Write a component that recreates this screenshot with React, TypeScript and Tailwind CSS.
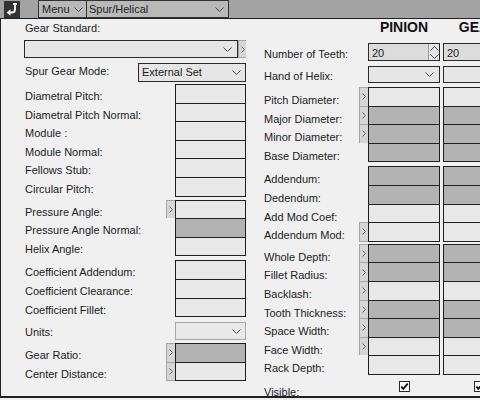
import clsx from "clsx";

type Field = { label: string; dark?: boolean; push?: boolean };

const leftA: Field[] = [
  { label: "Diametral Pitch:" },
  { label: "Diametral Pitch Normal:" },
  { label: "Module :" },
  { label: "Module Normal:" },
  { label: "Fellows Stub:" },
  { label: "Circular Pitch:" },
];

const leftB: Field[] = [
  { label: "Pressure Angle:", push: true },
  { label: "Pressure Angle Normal:", dark: true },
  { label: "Helix Angle:" },
];

const leftC: Field[] = [
  { label: "Coefficient Addendum:" },
  { label: "Coefficient Clearance:" },
  { label: "Coefficient Fillet:" },
];

const leftD: Field[] = [
  { label: "Gear Ratio:", push: true, dark: true },
  { label: "Center Distance:", push: true },
];

const diameters: Field[] = [
  { label: "Pitch Diameter:", push: true },
  { label: "Major Diameter:", push: true, dark: true },
  { label: "Minor Diameter:", push: true, dark: true },
  { label: "Base Diameter:", dark: true },
];

const addenda: Field[] = [
  { label: "Addendum:", dark: true },
  { label: "Dedendum:", dark: true },
  { label: "Add Mod Coef:" },
  { label: "Addendum Mod:", push: true },
];

const depths: Field[] = [
  { label: "Whole Depth:", push: true, dark: true },
  { label: "Fillet Radius:", push: true, dark: true },
  { label: "Backlash:", push: true },
  { label: "Tooth Thickness:", push: true, dark: true },
  { label: "Space Width:", push: true, dark: true },
  { label: "Face Width:", push: true },
  { label: "Rack Depth:" },
];

function Chevron() {
  return (
    <svg width="9" height="5" viewBox="0 0 9 5" className="shrink-0">
      <path d="M0.5 0.5 4.5 4.5 8.5 0.5" fill="none" stroke="#4a4a4a" />
    </svg>
  );
}

function Caret() {
  return (
    <svg width="4" height="7" viewBox="0 0 4 7" className="shrink-0">
      <path d="M0.5 0.5 3.5 3.5 0.5 6.5" fill="none" stroke="#6a6a6a" />
    </svg>
  );
}

function AppIcon() {
  return (
    <svg width="16" height="17" viewBox="0 0 16 17" className="mt-px shrink-0">
      <rect width="16" height="17" fill="#333" />
      <rect x="9" y="2" width="4" height="2" fill="#f0f0f0" />
      <path d="M11 4 V8 Q11 11.5 7.5 11.5 H5.5" fill="none" stroke="#f0f0f0" strokeWidth="2" />
      <path d="M2.5 11.5 L6.5 8.3 V14.7 Z" fill="#f0f0f0" />
    </svg>
  );
}

function Push({ last, w = "w-[9px]" }: { last?: boolean; w?: string }) {
  return (
    <div
      className={clsx(
        "shrink-0 flex items-center justify-center bg-[#d6d6d6] border-l border-t border-[#a6a6a6]",
        w,
        last && "border-b"
      )}
    >
      <Caret />
    </div>
  );
}

function Cell({ dark, last, w }: { dark?: boolean; last?: boolean; w: string }) {
  return (
    <div
      className={clsx(
        "shrink-0 border-x border-t border-[#1f1f1f]",
        w,
        dark ? "bg-[#b3b3b3]" : "bg-[#e8e8e8]",
        last && "border-b"
      )}
    />
  );
}

function Check() {
  return (
    <svg width="11" height="11" viewBox="0 0 11 11">
      <rect x="0.5" y="0.5" width="10" height="10" fill="#fbfbfb" stroke="#2a2a2a" />
      <path d="M2.3 5.6 4.3 7.8 8.7 2.6" fill="none" stroke="#111" strokeWidth="1.8" />
    </svg>
  );
}

function LeftGroup({ rows, className }: { rows: Field[]; className?: string }) {
  return (
    <div className={clsx("flex flex-col", className)}>
      {rows.map((r, i) => {
        const last = i === rows.length - 1;
        return (
          <div key={r.label} className={clsx("flex", last ? "h-[19.6px]" : "h-[18.6px]")}>
            <span className="flex-1 pt-[5px] leading-[14px] whitespace-nowrap">{r.label}</span>
            {r.push && <Push last={last} />}
            <Cell dark={r.dark} last={last} w="w-[71px]" />
          </div>
        );
      })}
    </div>
  );
}

function RightGroup({ rows, className }: { rows: Field[]; className?: string }) {
  return (
    <div className={clsx("flex flex-col", className)}>
      {rows.map((r, i) => {
        const last = i === rows.length - 1;
        return (
          <div key={r.label} className={clsx("flex", last ? "h-[19.6px]" : "h-[18.6px]")}>
            <span className="w-[95px] shrink-0 pt-[6px] leading-[14px] whitespace-nowrap">{r.label}</span>
            {r.push ? <Push last={last} /> : <div className="w-[9px] shrink-0" />}
            <Cell dark={r.dark} last={last} w="w-[72px]" />
            <div className="w-[3px] shrink-0" />
            <Cell dark={r.dark} last={last} w="w-[72px]" />
          </div>
        );
      })}
    </div>
  );
}

export default function App() {
  return (
    <div className="w-[480px] h-[400px] overflow-hidden bg-[#f0f0f0] text-[11px] text-[#1c1c1c] font-['Liberation_Sans',Arial,sans-serif]">
      {/* title strip */}
      <div className="h-[18px] bg-[#a3a3a3] flex items-start">
        <div className="ml-[4px]">
          <AppIcon />
        </div>
        <div className="ml-[18px] w-[49px] h-[18px] border border-[#333] bg-[#b9b9b9] flex items-center justify-between pl-[3px] pr-[3px]">
          <span className="text-[#222]">Menu</span>
          <Chevron />
        </div>
        <div className="w-[142px] h-[18px] border border-l-0 border-[#333] bg-[#b9b9b9] flex items-center justify-between pl-[2px] pr-[4px]">
          <span className="text-[#222]">Spur/Helical</span>
          <Chevron />
        </div>
      </div>

      <div className="w-[600px] h-[380px] border-t border-l border-b-2 border-[#222] flex">
        {/* gear-set inputs */}
        <div className="w-[245px] pl-[24px] flex flex-col shrink-0">
          <span className="mt-[2px] leading-[14px]">Gear Standard:</span>
          <div className="mt-[5px] -ml-px h-[18px] flex">
            <div className="flex-1 border border-[#2a2a2a] bg-[#e6e6e6] flex items-center justify-end pr-[5px]">
              <Chevron />
            </div>
            <Push w="w-[8px]" last />
          </div>
          <div className="mt-[5px] h-[19px] flex">
            <span className="flex-1 pt-[1px] leading-[14px]">Spur Gear Mode:</span>
            <div className="w-[108px] border border-[#2a2a2a] bg-[#e6e6e6] flex items-center justify-between pl-[3px] pr-[4px]">
              <span>External Set</span>
              <Chevron />
            </div>
          </div>
          <LeftGroup rows={leftA} className="mt-[2px]" />
          <LeftGroup rows={leftB} className="mt-[3px]" />
          <LeftGroup rows={leftC} className="mt-[4px]" />
          <div className="mt-[5px] h-[18px] flex">
            <span className="flex-1 pt-[3px] leading-[14px]">Units:</span>
            <div className="w-[71px] border border-[#a9a9a9] bg-[#e9e9e9] flex items-center justify-end pr-[4px]">
              <Chevron />
            </div>
          </div>
          <LeftGroup rows={leftD} className="mt-[3px]" />
        </div>

        {/* pinion / gear columns */}
        <div className="pl-[18px] flex flex-col">
          <div className="h-[17px] flex items-center font-bold text-[14px] text-[#111]">
            <div className="w-[104px] shrink-0" />
            <div className="w-[72px] text-center">PINION</div>
            <div className="w-[3px]" />
            <div className="w-[72px] text-center">GEAR</div>
          </div>

          <div className="mt-[7px] h-[19px] flex">
            <span className="w-[104px] shrink-0 pt-[4px] leading-[14px]">Number of Teeth:</span>
            <div className="w-[72px] border border-[#2a2a2a] bg-[#dcdcdc] flex">
              <span className="flex-1 pl-[3px] pt-[2px] leading-[14px]">20</span>
              <div className="w-[11px] border-l border-[#9a9a9a] bg-[#e4e4e4] flex flex-col items-center justify-around">
                <svg width="9" height="5" viewBox="0 0 9 5">
                  <path d="M0.5 4.5 4.5 0.5 8.5 4.5" fill="none" stroke="#4a4a4a" />
                </svg>
                <Chevron />
              </div>
            </div>
            <div className="w-[3px]" />
            <div className="w-[72px] border border-[#2a2a2a] bg-[#dcdcdc]">
              <span className="block pl-[3px] pt-[2px] leading-[14px]">20</span>
            </div>
          </div>

          <div className="mt-[5px] h-[18px] flex">
            <span className="w-[104px] shrink-0 pt-[3px] leading-[14px]">Hand of Helix:</span>
            <div className="w-[72px] border border-[#2a2a2a] bg-[#e6e6e6] flex items-center justify-end pr-[5px]">
              <Chevron />
            </div>
            <div className="w-[3px]" />
            <div className="w-[72px] border border-[#2a2a2a] bg-[#e6e6e6] flex items-center justify-end pr-[5px]">
              <Chevron />
            </div>
          </div>

          <RightGroup rows={diameters} className="mt-[4px]" />
          <RightGroup rows={addenda} className="mt-[4px]" />
          <RightGroup rows={depths} className="mt-[2px]" />

          <div className="mt-[6px] flex">
            <span className="w-[104px] shrink-0 pt-[4px] leading-[14px]">Visible:</span>
            <div className="w-[72px] flex justify-center">
              <Check />
            </div>
            <div className="w-[3px]" />
            <div className="w-[72px] flex justify-center">
              <Check />
            </div>
          </div>
        </div>
      </div>
    </div>
  );
}
